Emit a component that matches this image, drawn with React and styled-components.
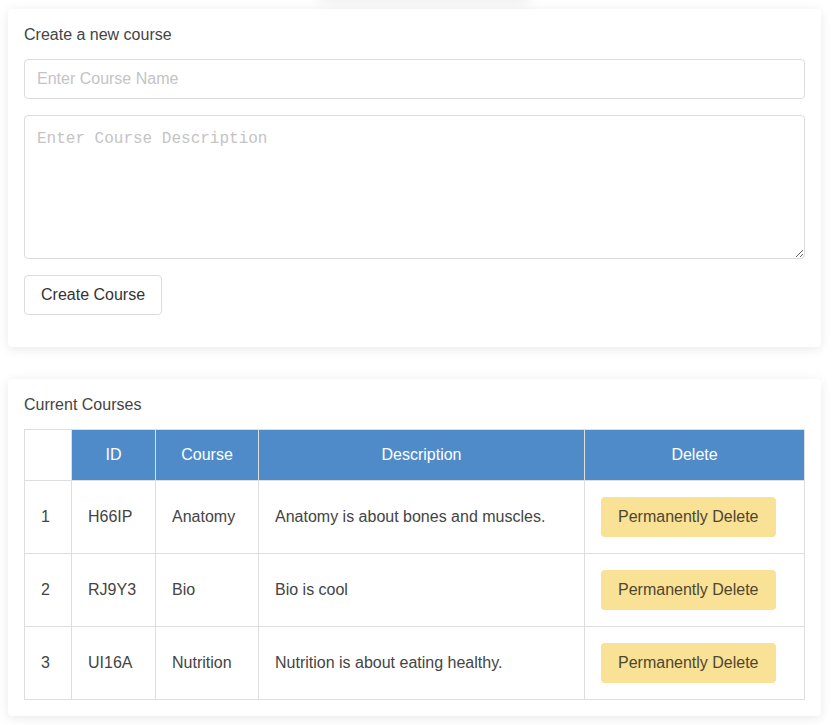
import React from 'react';
import styled, { createGlobalStyle } from 'styled-components';

const GlobalStyle = createGlobalStyle`
  body {
    margin: 0;
    background: #ffffff;
    font-family: "Liberation Sans", Arial, sans-serif;
    color: #444;
  }
`;

const Page = styled.div`
  position: relative;
  padding: 9px 11px 9px 8px;
  display: flex;
  flex-direction: column;
  gap: 32px;
`;

const TopShade = styled.div`
  position: absolute;
  top: -20px;
  left: 320px;
  width: 210px;
  height: 20px;
  box-shadow: 0 2px 14px rgba(0, 0, 0, 0.08);
`;

const Card = styled.section`
  background: #fff;
  border-radius: 4px;
  box-shadow: 0 2px 12px rgba(0, 0, 0, 0.09);
  padding: 16px 16px ${props => props.bottom || 16}px;
  display: flex;
  flex-direction: column;
`;

const Heading = styled.div`
  font-size: 16px;
  line-height: 18px;
  padding-top: 1px;
  color: #444;
  margin-bottom: 15px;
`;

const Input = styled.input`
  box-sizing: border-box;
  height: 40px;
  border: 1px solid #dcdcdc;
  border-radius: 4px;
  padding: 0 12px;
  font-family: "Liberation Sans", Arial, sans-serif;
  font-size: 16px;
  margin-bottom: 16px;
  &::placeholder {
    color: #c4c4c4;
  }
`;

const TextArea = styled.textarea`
  box-sizing: border-box;
  height: 144px;
  border: 1px solid #dcdcdc;
  border-radius: 4px;
  padding: 14px 12px;
  font-family: "Liberation Mono", "Courier New", monospace;
  font-size: 16px;
  margin: 0 0 16px;
  &::placeholder {
    color: #c4c4c4;
  }
`;

const Button = styled.button`
  align-self: flex-start;
  box-sizing: border-box;
  height: 40px;
  padding: 0 16px;
  background: #fff;
  border: 1px solid #dcdcdc;
  border-radius: 4px;
  font-family: "Liberation Sans", Arial, sans-serif;
  font-size: 16px;
  color: #333;
`;

const Table = styled.table`
  border-collapse: collapse;
  table-layout: fixed;
  width: 100%;
  font-size: 16px;
`;

const Th = styled.th`
  box-sizing: border-box;
  height: 51px;
  padding: 0;
  font-weight: normal;
  color: #fff;
  background: ${props => (props.blank ? '#fff' : '#508bc9')};
  border: 1px solid #dedede;
  text-align: center;
  width: ${props => (props.w ? `${props.w}px` : 'auto')};
`;

const Td = styled.td`
  height: 72px;
  border: 1px solid #dedede;
  padding: 0 16px;
  color: #444;
  text-align: left;
`;

const DeleteButton = styled.button`
  height: 40px;
  padding: 0 17px;
  background: #f9e196;
  border: none;
  border-radius: 4px;
  font-family: "Liberation Sans", Arial, sans-serif;
  font-size: 16px;
  color: #4f4630;
`;

const courses = [
  { id: 'H66IP', name: 'Anatomy', desc: 'Anatomy is about bones and muscles.' },
  { id: 'RJ9Y3', name: 'Bio', desc: 'Bio is cool' },
  { id: 'UI16A', name: 'Nutrition', desc: 'Nutrition is about eating healthy.' }
];

export default function App() {
  return (
    <>
      <GlobalStyle />
      <Page>
        <TopShade />
        <Card bottom={32}>
          <Heading>Create a new course</Heading>
          <Input placeholder="Enter Course Name" />
          <TextArea placeholder="Enter Course Description" />
          <Button>Create Course</Button>
        </Card>
        <Card>
          <Heading>Current Courses</Heading>
          <Table>
            <thead>
              <tr>
                <Th blank w={47} />
                <Th w={84}>ID</Th>
                <Th w={103}>Course</Th>
                <Th w={326}>Description</Th>
                <Th>Delete</Th>
              </tr>
            </thead>
            <tbody>
              {courses.map((c, idx) => (
                <tr key={c.id}>
                  <Td>{idx + 1}</Td>
                  <Td>{c.id}</Td>
                  <Td>{c.name}</Td>
                  <Td>{c.desc}</Td>
                  <Td>
                    <DeleteButton>Permanently Delete</DeleteButton>
                  </Td>
                </tr>
              ))}
            </tbody>
          </Table>
        </Card>
      </Page>
    </>
  );
}
